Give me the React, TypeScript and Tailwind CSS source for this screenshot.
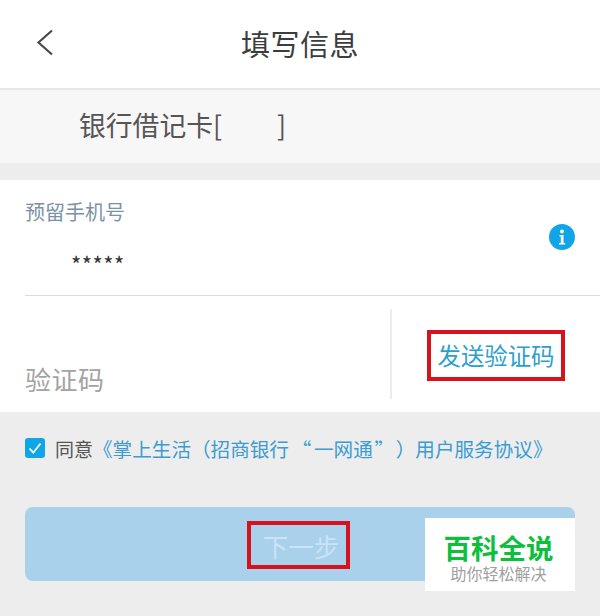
export default function App() {
  return (
    <div lang="zh-CN" className="relative flex h-[616px] w-[600px] flex-col overflow-hidden bg-[#ededed] [font-family:'Noto_Sans_CJK_SC',sans-serif]">
      {/* header */}
      <header className="flex h-[90px] shrink-0 items-center justify-center border-b-2 border-[#e8e8e8] bg-white">
        <svg className="absolute left-[36px] top-[29px] h-[27px] w-[18px]" viewBox="0 0 18 27" fill="none">
          <path d="M16 1.5L2.5 13.5L16 25.5" stroke="#4a4a4a" strokeWidth="2.2" />
        </svg>
        <h1 className="text-[29px] font-normal tracking-[0.5px] text-[#3d3d3d]">填写信息</h1>
      </header>

      {/* card */}
      <div className="flex h-[73px] shrink-0 items-center whitespace-pre bg-[#f7f7f7] pb-[3px] pl-[79px] text-[26.8px] text-[#555555]">
        银行借记卡[<span className="ml-[55px]">]</span>
      </div>

      <div className="mt-[17px] flex h-[232px] shrink-0 flex-col bg-white pl-[25px]">
        <div className="relative h-[116px] shrink-0 border-b border-[#dcdcdc] pt-[17px]">
          <div className="text-[20px] leading-[30px] text-[#7b92a6]">预留手机号</div>
          <div className="mt-[22px] pl-[46px] text-[22px] leading-[28px] tracking-[0.5px] text-[#333333]">*****</div>
          <svg className="absolute right-[25px] top-[44px] h-[26px] w-[26px]" viewBox="0 0 26 26">
            <circle cx="13" cy="13" r="13" fill="#10a5e6" />
            <circle cx="13" cy="7.5" r="1.9" fill="#fff" />
            <path d="M10.5 11h4v8h1.6v1.6H10V19h1.8v-6.4h-1.3z" fill="#fff" />
          </svg>
        </div>
        <div className="flex min-h-0 flex-1">
          <div className="flex flex-1 items-end pb-[14px] text-[26px] leading-[38px] tracking-[0.5px] text-[#a3a3a3]">验证码</div>
          <div className="mb-[13px] mt-[13px] flex w-[210px] border-l-2 border-[#ececec] pl-[35px] pt-[21px]">
            <div className="flex h-[51px] w-[138px] items-center justify-center border-4 border-[#d7121d] text-[23.4px] text-[#2b9fd0]">
              发送验证码
            </div>
          </div>
        </div>
      </div>

      {/* agreement */}
      <div className="mt-[26px] flex h-[20px] shrink-0 items-center pl-[25px]">
        <span className="flex h-[20px] w-[20px] shrink-0 items-center justify-center rounded-[3px] bg-[#10a5e6]">
          <svg className="h-[16px] w-[16px]" viewBox="0 0 16 16" fill="none">
            <path d="M2.5 8.5l3.8 4.2L13.5 3.5" stroke="#fff" strokeWidth="1.8" />
          </svg>
        </span>
        <span className="ml-[10px] whitespace-nowrap pt-[2px] text-[19px] text-[#555555]">同意</span>
        <span className="whitespace-nowrap pt-[2px] text-[19.6px] text-[#3c9cd0] [font-kerning:none] [text-spacing-trim:space-all]">
          《掌上生活（招商银行
          <span className="inline-block w-[25px] text-center">“</span>
          一网通
          <span className="inline-block w-[23px] text-center">”</span>
          ）用户服务协议》
        </span>
      </div>

      {/* next */}
      <div className="mx-[25px] mt-[49px] flex h-[74px] shrink-0 items-center rounded-[8px] bg-[#a9d1ec] pl-[222px] pt-[2px]">
        <div className="flex h-[48px] w-[103px] items-center justify-center border-4 border-[#d7121d] pl-[5px] pt-[2px] text-[25.5px] text-[#cbe3f4]">
          下一步
        </div>
      </div>

      {/* watermark */}
      <div className="absolute left-[425px] top-[518px] flex h-[73px] w-[150px] flex-col items-center bg-white pr-[3px] pt-[14px]">
        <div className="text-[27.5px] font-bold leading-[30px] text-[#0dbf3c]">百科全说</div>
        <div className="text-[16px] leading-[22px] text-[#a0a0a0]">助你轻松解决</div>
      </div>
    </div>
  );
}
